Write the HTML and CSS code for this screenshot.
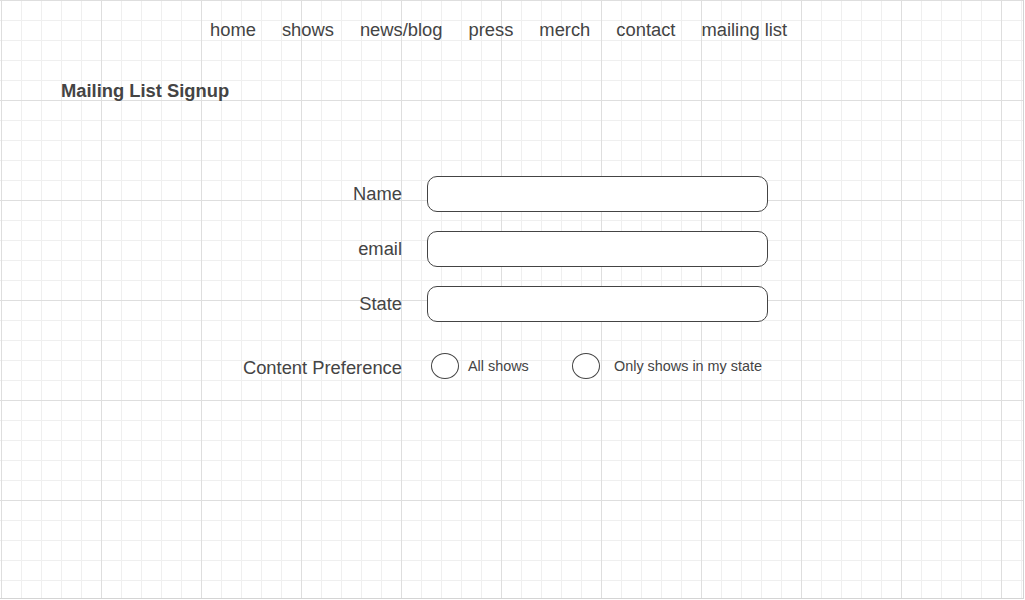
FILE: index.html
```html
<!DOCTYPE html>
<html>
<head>
<meta charset="utf-8">
<link rel="stylesheet" href="styles.css">
</head>
<body>
<div class="canvas">
  <nav class="nav">
    <a>home</a><a>shows</a><a>news/blog</a><a>press</a><a>merch</a><a>contact</a><a>mailing list</a>
  </nav>
  <h1 class="title">Mailing List Signup</h1>
  <form class="form">
    <label class="lbl">Name</label><div class="field"></div>
    <label class="lbl">email</label><div class="field"></div>
    <label class="lbl">State</label><div class="field"></div>
    <label class="lbl pref">Content Preference</label>
    <div class="radios">
      <div class="opt opt1"><span class="circle"></span><span class="otext">All shows</span></div>
      <div class="opt opt2"><span class="circle"></span><span class="otext">Only shows in my state</span></div>
    </div>
  </form>
</div>
</body>
</html>
```
FILE: styles.css
```css
html, body { margin: 0; padding: 0; background: #fff; }
.canvas {
  width: 1024px;
  height: 599px;
  box-sizing: border-box;
  border-right: 1px solid #d4d4d4;
  border-bottom: 1px solid #d4d4d4;
  background-color: #fff;
  background-image:
    linear-gradient(to right, #dedede 1px, transparent 1px),
    linear-gradient(to bottom, #dedede 1px, transparent 1px),
    linear-gradient(to right, #efefef 1px, transparent 1px),
    linear-gradient(to bottom, #efefef 1px, transparent 1px);
  background-size: 100px 100px, 100px 100px, 20px 20px, 20px 20px;
  background-position: 1px 0, 1px 0, 1px 0, 1px 0;
  font-family: "Liberation Sans", Arial, sans-serif;
  color: #444;
  overflow: hidden;
}
.nav {
  display: flex;
  gap: 26px;
  padding: 20px 0 0 210px;
  font-size: 18.35px;
  line-height: 20px;
}
.nav a { color: #444; }
.title {
  margin: 41px 0 0 61px;
  font-size: 18.35px;
  line-height: 20px;
  font-weight: bold;
  color: #444;
}
.form {
  display: grid;
  grid-template-columns: 402px 341px;
  column-gap: 25px;
  row-gap: 19px;
  margin-top: 75px;
}
.lbl {
  justify-self: end;
  align-self: center;
  font-size: 18.35px;
  line-height: 20px;
}
.pref { margin-top: 15px; }
.field {
  height: 36px;
  box-sizing: border-box;
  border: 1px solid #444;
  border-radius: 10px;
  background: #fff;
}
.radios {
  display: flex;
  align-items: center;
  height: 28px;
  margin-top: 11px;
  padding-left: 4px;
}
.opt { display: flex; align-items: center; }
.opt1 { width: 141px; }
.opt1 .otext { margin-left: 9px; }
.opt2 .otext { margin-left: 14px; }
.circle {
  width: 28px;
  height: 26px;
  box-sizing: border-box;
  border: 1px solid #444;
  border-radius: 50%;
  background: #fff;
}
.otext { font-size: 14.4px; line-height: 16px; color: #444; }
```
